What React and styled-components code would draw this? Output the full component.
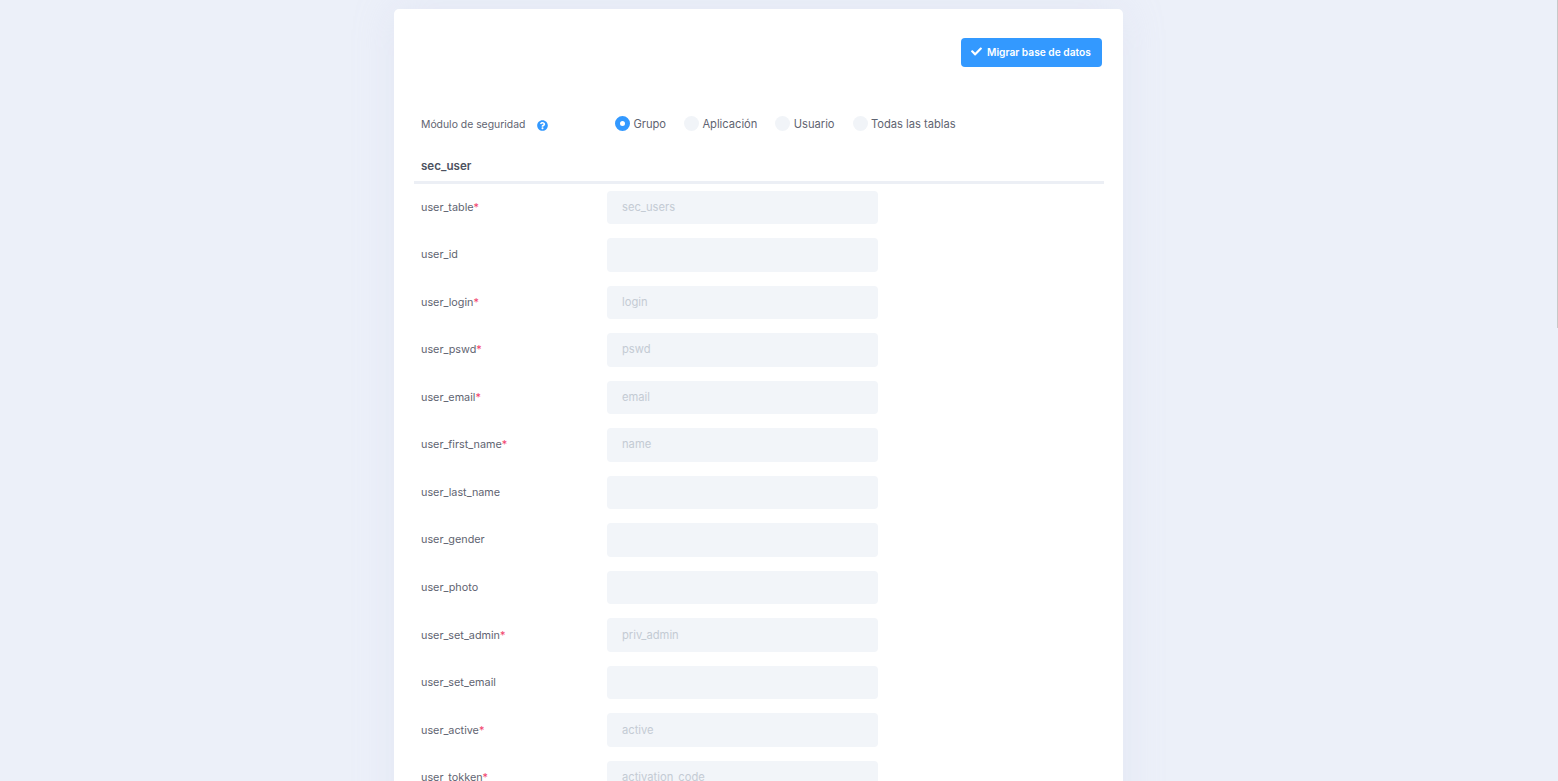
import React from "react";
import styled, { createGlobalStyle } from "styled-components";
import { FaCheck, FaQuestionCircle } from "react-icons/fa";

const Global = createGlobalStyle`
  html, body {
    margin: 0;
    height: 781px;
    overflow: hidden;
    background: #ecf0f9;
    font-family: Inter, "Liberation Sans", sans-serif;
  }
`;

const Page = styled.div`
  display: flex;
  justify-content: center;
  padding: 9px 41px 0 0;
`;

const Card = styled.main`
  width: 729px;
  min-height: 900px;
  box-sizing: border-box;
  padding: 29px 19px 0 20px;
  background: #fff;
  border-radius: 5px;
  box-shadow: 0 0 40px rgba(200, 205, 230, 0.25);
`;

const Toolbar = styled.div`
  display: flex;
  justify-content: flex-end;
  padding-right: 2px;
`;

const PrimaryButton = styled.button`
  display: flex;
  align-items: center;
  gap: 5px;
  height: 29px;
  width: 141px;
  padding: 0 0 2px 10px;
  box-sizing: border-box;
  border: 0;
  border-radius: 4px;
  background: #3399ff;
  color: #fff;
  font: 600 10.2px Inter, sans-serif;
  white-space: nowrap;
`;

const ModuleRow = styled.div`
  display: flex;
  align-items: center;
  height: 15px;
  margin-top: 49px;
  padding-left: 7px;
`;

const ModuleLabel = styled.div`
  display: flex;
  align-items: center;
  width: 194px;
  padding-top: 2px;
  font-size: 10.4px;
  color: #5f6471;
`;

const HelpIcon = styled(FaQuestionCircle)`
  margin: 1px 0 0 12px;
  color: #3399ff;
  font-size: 11px;
`;

const RadioGroup = styled.div`
  display: flex;
  gap: 18px;
`;

const RadioItem = styled.label`
  display: flex;
  align-items: center;
  gap: 3.4px;
  font-size: 11.15px;
  color: #5f6471;
`;

const RadioDot = styled.span`
  width: 15px;
  height: 15px;
  box-sizing: border-box;
  border-radius: 50%;
  background: ${(p) => (p.$checked ? "#fff" : "#f1f4f8")};
  border: ${(p) => (p.$checked ? "5px solid #3399ff" : "none")};
`;

const SectionTitle = styled.h2`
  margin: 27px 0 0;
  padding: 0 0 7px 7px;
  border-bottom: 3px solid #eceff5;
  font-size: 11.6px;
  line-height: 16px;
  font-weight: 600;
  color: #4d5260;
`;

const Rows = styled.div`
  display: grid;
  grid-auto-rows: 33.4px;
  row-gap: 14.14px;
  margin-top: 6.7px;
`;

const Row = styled.div`
  display: grid;
  grid-template-columns: 186px 271px;
  align-items: center;
  padding-left: 7px;
`;

const FieldLabel = styled.label`
  font-size: 10.8px;
  color: #5f6471;
`;

const Required = styled.span`
  color: #f1416c;
`;

const TextInput = styled.input`
  height: 33.4px;
  width: 271px;
  box-sizing: border-box;
  padding: 0 15px 1px;
  border: 0;
  border-radius: 4px;
  background: #f2f5f9;
  font: 11.2px Inter, sans-serif;
  &::placeholder {
    color: #c4cbd4;
    opacity: 1;
  }
`;

const ScrollThumb = styled.div`
  position: fixed;
  top: 0;
  right: 0;
  width: 1px;
  height: 328px;
  background: #c8c8c8;
`;

const radios = [
  { label: "Grupo", checked: true },
  { label: "Aplicación" },
  { label: "Usuario" },
  { label: "Todas las tablas" },
];

const fields = [
  { name: "user_table", required: true, placeholder: "sec_users" },
  { name: "user_id" },
  { name: "user_login", required: true, placeholder: "login" },
  { name: "user_pswd", required: true, placeholder: "pswd" },
  { name: "user_email", required: true, placeholder: "email" },
  { name: "user_first_name", required: true, placeholder: "name" },
  { name: "user_last_name" },
  { name: "user_gender" },
  { name: "user_photo" },
  { name: "user_set_admin", required: true, placeholder: "priv_admin" },
  { name: "user_set_email" },
  { name: "user_active", required: true, placeholder: "active" },
  { name: "user_tokken", required: true, placeholder: "activation_code" },
];

const App = () => {
  return (
    <>
      <Global />
      <Page>
        <Card>
          <Toolbar>
            <PrimaryButton>
              <FaCheck size={11} />
              Migrar base de datos
            </PrimaryButton>
          </Toolbar>

          <ModuleRow>
            <ModuleLabel>
              Módulo de seguridad
              <HelpIcon />
            </ModuleLabel>
            <RadioGroup>
              {radios.map((r) => (
                <RadioItem key={r.label}>
                  <RadioDot $checked={r.checked} />
                  {r.label}
                </RadioItem>
              ))}
            </RadioGroup>
          </ModuleRow>

          <SectionTitle>sec_user</SectionTitle>

          <Rows>
            {fields.map((f) => (
              <Row key={f.name}>
                <FieldLabel>
                  {f.name}
                  {f.required && <Required>*</Required>}
                </FieldLabel>
                <TextInput placeholder={f.placeholder} />
              </Row>
            ))}
          </Rows>
        </Card>
      </Page>
      <ScrollThumb />
    </>
  );
};

export default App;
